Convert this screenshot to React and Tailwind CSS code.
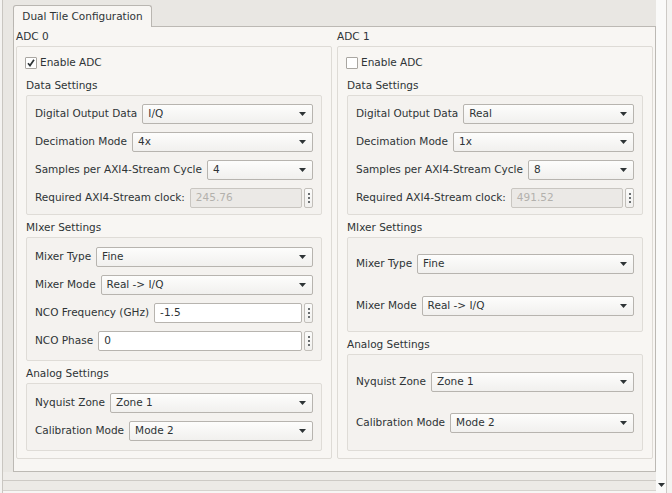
import React from 'react';

const FONT = "font-['DejaVu_Sans','Liberation_Sans',sans-serif]";

function Caret() {
  return (
    <svg width="7" height="4" viewBox="0 0 7 4" className="shrink-0">
      <polygon points="0,0 7,0 3.5,4" fill="#2e3436" />
    </svg>
  );
}

function Combo({ value }) {
  return (
    <div className="flex-1 h-[20px] flex items-center justify-between pl-[5px] pr-[6px] border border-[#b7b4af] rounded-[2px] bg-gradient-to-b from-[#fdfdfc] to-[#f1f0ee]">
      <span className="whitespace-nowrap">{value}</span>
      <Caret />
    </div>
  );
}

function Dots() {
  return (
    <div className="w-[9px] h-[20px] border border-[#c2bfba] rounded-[2px] bg-gradient-to-b from-[#fbfbfa] to-[#f1f0ee] flex flex-col items-center justify-center gap-[2px]">
      <span className="w-[2px] h-[2px] bg-[#6a6e70]" />
      <span className="w-[2px] h-[2px] bg-[#6a6e70]" />
      <span className="w-[2px] h-[2px] bg-[#6a6e70]" />
    </div>
  );
}

function Field({ value, disabled }) {
  return (
    <div className="flex-1 flex items-center gap-[2px]">
      <div
        className={
          disabled
            ? 'flex-1 h-[20px] flex items-center pl-[5px] border border-[#c9c6c1] rounded-[2px] bg-[#ebe9e6] text-[#b3b1ad]'
            : 'flex-1 h-[20px] flex items-center pl-[5px] border border-[#b7b4af] rounded-[2px] bg-white'
        }
      >
        {value}
      </div>
      <Dots />
    </div>
  );
}

function Row({ label, children }) {
  return (
    <div className="flex items-center gap-[5px] h-[20px]">
      <span className="whitespace-nowrap">{label}</span>
      {children}
    </div>
  );
}

function Title({ children }) {
  return <div className="h-[22px] pt-[4px] flex items-center">{children}</div>;
}

function Checkbox({ checked }) {
  return (
    <div className="w-[12px] h-[12px] border border-[#a9a6a1] rounded-[1px] bg-white flex items-center justify-center">
      {checked && (
        <svg width="8" height="8" viewBox="0 0 8 8">
          <path d="M1 4.2 L3 6.6 L7 0.8" stroke="#2e3436" strokeWidth="1.7" fill="none" />
        </svg>
      )}
    </div>
  );
}

function AdcColumn({ name, enabled, data, mixer, analog, compact }) {
  return (
    <div className="flex-1 flex flex-col">
      <div className="h-[19px] flex items-center">{name}</div>
      <div className="border border-[#dedbd6] rounded-[2px] px-[9px] pb-[7px] flex flex-col">
        <div className="pt-[6px] h-[26px] -ml-px flex items-center gap-[3px]">
          <Checkbox checked={enabled} />
          <span>Enable ADC</span>
        </div>
        <Title>Data Settings</Title>
        <div className="h-[120px] border border-[#dfdcd7] rounded-[2px] bg-[#f4f2ef] px-[8px] pt-[8px] flex flex-col gap-[8px]">
          <Row label="Digital Output Data"><Combo value={data.output} /></Row>
          <Row label="Decimation Mode"><Combo value={data.decimation} /></Row>
          <Row label="Samples per AXI4-Stream Cycle"><Combo value={data.samples} /></Row>
          <Row label="Required AXI4-Stream clock:"><Field value={data.clock} disabled /></Row>
        </div>
        <Title>MIxer Settings</Title>
        {compact ? (
          <div className="h-[95px] border border-[#dfdcd7] rounded-[2px] bg-[#f4f2ef] px-[8px] pt-[16px] flex flex-col gap-[22px]">
            <Row label="Mixer Type"><Combo value={mixer.type} /></Row>
            <Row label="Mixer Mode"><Combo value={mixer.mode} /></Row>
          </div>
        ) : (
          <div className="border border-[#dfdcd7] rounded-[2px] bg-[#f4f2ef] px-[8px] py-[9px] flex flex-col gap-[8px]">
            <Row label="Mixer Type"><Combo value={mixer.type} /></Row>
            <Row label="Mixer Mode"><Combo value={mixer.mode} /></Row>
            <Row label="NCO Frequency (GHz)"><Field value={mixer.freq} /></Row>
            <Row label="NCO Phase"><Field value={mixer.phase} /></Row>
          </div>
        )}
        <Title>Analog Settings</Title>
        {compact ? (
          <div className="h-[97px] border border-[#dfdcd7] rounded-[2px] bg-[#f4f2ef] px-[8px] pt-[17px] flex flex-col gap-[21px]">
            <Row label="Nyquist Zone"><Combo value={analog.zone} /></Row>
            <Row label="Calibration Mode"><Combo value={analog.cal} /></Row>
          </div>
        ) : (
          <div className="border border-[#dfdcd7] rounded-[2px] bg-[#f4f2ef] px-[8px] py-[9px] flex flex-col gap-[8px]">
            <Row label="Nyquist Zone"><Combo value={analog.zone} /></Row>
            <Row label="Calibration Mode"><Combo value={analog.cal} /></Row>
          </div>
        )}
      </div>
    </div>
  );
}

export default function App() {
  return (
    <div className={`${FONT} w-[672px] h-[493px] overflow-hidden flex bg-[#edebe8] text-[10.5px] text-[#2e3436]`}>
      <div className="w-[3px] border-r border-[#c9c6c1] bg-[#f4f3f1]" />

      <div className="w-[653px] flex flex-col">
        <div className="pl-[10px] pt-[5px] bg-[#e9e7e3]">
          <div className="relative z-10 -mb-px w-[139px] h-[22px] border border-b-0 border-[#b9b6b1] rounded-t-[3px] bg-[#f8f6f3] flex items-center justify-center">
            Dual Tile Configuration
          </div>
          <div className="h-[446px] border border-[#bcb9b4] bg-[#f8f6f3] pl-[2px] pr-[2px] flex gap-[5px]">
            <AdcColumn
              name="ADC 0"
              enabled
              data={{ output: 'I/Q', decimation: '4x', samples: '4', clock: '245.76' }}
              mixer={{ type: 'Fine', mode: 'Real -> I/Q', freq: '-1.5', phase: '0' }}
              analog={{ zone: 'Zone 1', cal: 'Mode 2' }}
            />
            <AdcColumn
              name="ADC 1"
              compact
              data={{ output: 'Real', decimation: '1x', samples: '8', clock: '491.52' }}
              mixer={{ type: 'Fine', mode: 'Real -> I/Q' }}
              analog={{ zone: 'Zone 1', cal: 'Mode 2' }}
            />
          </div>
        </div>
        <div className="h-[9px] border-b border-[#cdcac5] bg-[#eeece9]" />
        <div className="h-[9px] bg-[#eceae6]" />
        <div className="flex-1 bg-[#f7f6f4] border-t border-[#d6d3ce]" />
      </div>

      <div className="w-[11px] flex flex-col border-r border-[#cdcac6] bg-[#fafaf9]">
        <div className="flex-1" />
        <div className="h-[4px] mb-[6px] flex justify-center">
          <Caret />
        </div>
      </div>
      <div className="flex-1 bg-[#f4f3f1]" />
    </div>
  );
}
